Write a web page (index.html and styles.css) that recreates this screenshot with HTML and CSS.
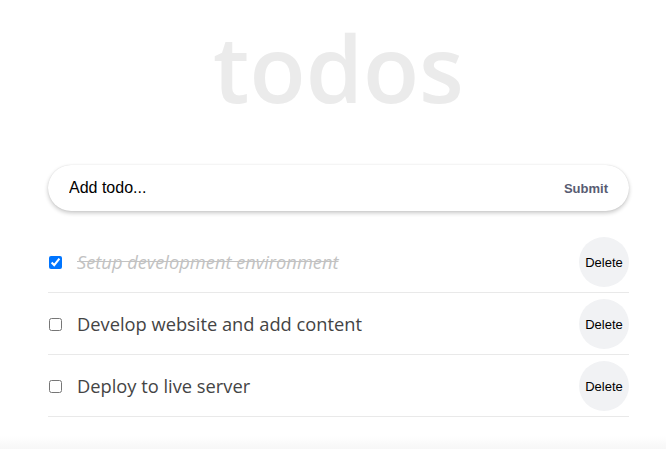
FILE: index.html
```html
<!DOCTYPE html>
<html>
<head>
<meta charset="utf-8">
<link rel="stylesheet" href="styles.css">
</head>
<body>
<main class="page">
  <div class="app">
    <h1 class="title">todos</h1>
    <form class="add-form">
      <input class="add-input" type="text" value="Add todo...">
      <button class="submit" type="button">Submit</button>
    </form>
    <ul class="list">
      <li class="item done">
        <input class="check" type="checkbox" checked>
        <span class="label">Setup development environment</span>
        <button class="delete" type="button">Delete</button>
      </li>
      <li class="item">
        <input class="check" type="checkbox">
        <span class="label">Develop website and add content</span>
        <button class="delete" type="button">Delete</button>
      </li>
      <li class="item">
        <input class="check" type="checkbox">
        <span class="label">Deploy to live server</span>
        <button class="delete" type="button">Delete</button>
      </li>
    </ul>
  </div>
</main>
</body>
</html>
```

FILE: styles.css
```css
html, body {
  margin: 0;
  padding: 0;
}
body {
  background: linear-gradient(to bottom, #ffffff 0, #ffffff 436px, #f7f7f7 449px);
  height: 449px;
  overflow: hidden;
}
.page {
  height: 440px;
  overflow: hidden;
}
.app {
  width: 581px;
  margin-left: 48px;
}
.title {
  margin: 0;
  padding-top: 18px;
  height: 125px;
  box-sizing: border-box;
  text-align: center;
  font-family: "Open Sans", sans-serif;
  font-weight: 600;
  font-size: 92px;
  line-height: 100px;
  color: #ebebeb;
}
.add-form {
  margin: 40px 0 0 0;
  height: 46px;
  display: flex;
  align-items: center;
  border-radius: 23px;
  background: #fff;
  box-shadow: 0 2px 4px rgba(0, 0, 0, 0.22), 0 0 1px rgba(0, 0, 0, 0.15);
}
.add-input {
  flex: 1;
  border: none;
  outline: none;
  background: transparent;
  margin-left: 21px;
  padding: 0;
  font-family: "Liberation Sans", Arial, sans-serif;
  font-size: 16px;
  color: #000;
}
.submit {
  border: none;
  background: transparent;
  padding: 0;
  margin-right: 21px;
  font-family: "Liberation Sans", Arial, sans-serif;
  font-weight: bold;
  font-size: 13px;
  color: #585c72;
}
.list {
  list-style: none;
  margin: 20px 0 0 0;
  padding: 0;
}
.item {
  display: flex;
  align-items: center;
  padding: 6px 0 5px;
  border-bottom: 1px solid #e9e9e9;
}
.check {
  width: 13px;
  height: 13px;
  margin: 0 0 0 1px;
}
.label {
  flex: 1;
  margin-left: 15px;
  font-family: "Open Sans", sans-serif;
  font-size: 18.3px;
  line-height: 24px;
  color: #444;
}
.done .label {
  font-style: italic;
  color: #c2c2c2;
  text-decoration: line-through;
}
.delete {
  width: 50px;
  height: 50px;
  border-radius: 50%;
  border: none;
  padding: 0;
  background: #f1f2f4;
  font-family: "Liberation Sans", Arial, sans-serif;
  font-size: 13px;
  color: #000;
}
```
